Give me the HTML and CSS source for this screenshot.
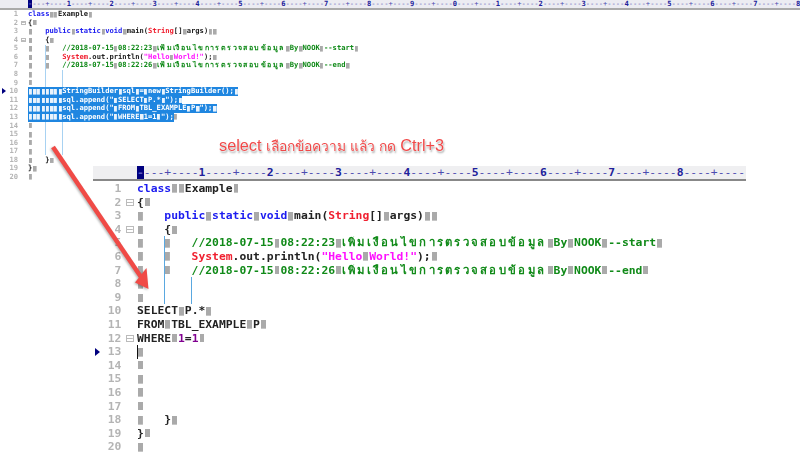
FILE: index.html
```html
<!DOCTYPE html>
<html lang="th">
<head>
<meta charset="utf-8">
<title>Ctrl+3 SQL</title>
<link rel="stylesheet" href="styles.css">
</head>
<body>
<section class="ed ed-a">
  <div class="ruler"><span class="rul"><b class="cur">-</b>---+----<b>1</b>----+----<b>2</b>----+----<b>3</b>----+----<b>4</b>----+----<b>5</b>----+----<b>6</b>----+----<b>7</b>----+----<b>8</b>----+----<b>9</b>----+----<b>0</b>----+----<b>1</b>----+----<b>2</b>----+----<b>3</b>----+----<b>4</b>----+----<b>5</b>----+----<b>6</b>----+----<b>7</b>----+----<b>8</b></span></div>
  <div class="body">
    <i class="guide g1"></i><i class="guide g2"></i>
    <div class="ln"><span class="n">1</span><span class="f"></span><code><em class="k">class</em><i class="m"></i><i class="m"></i>Example<i class="m"></i></code></div>
    <div class="ln"><span class="n">2</span><span class="f"><u class="box"></u></span><code>{<i class="m"></i></code></div>
    <div class="ln"><span class="n">3</span><span class="f"></span><code><i class="t"></i><em class="k">public</em><i class="m"></i><em class="k">static</em><i class="m"></i><em class="k">void</em><i class="m"></i>main(<em class="r">String</em>[]<i class="m"></i>args)<i class="m"></i><i class="m"></i></code></div>
    <div class="ln"><span class="n">4</span><span class="f"><u class="box"></u></span><code><i class="t"></i>{<i class="m"></i></code></div>
    <div class="ln"><span class="n">5</span><span class="f"></span><code><i class="t"></i><i class="t"></i><em class="c">//2018-07-15<i class="m"></i>08:22:23<i class="m"></i><span class="th">เพิ่มเงื่อนไขการตรวจสอบข้อมูล</span><i class="m"></i>By<i class="m"></i>NOOK<i class="m"></i>--start</em><i class="m"></i></code></div>
    <div class="ln"><span class="n">6</span><span class="f"></span><code><i class="t"></i><i class="t"></i><em class="r">System</em>.out.println(<em class="s">"Hello<i class="m"></i>World!"</em>);<i class="m"></i></code></div>
    <div class="ln"><span class="n">7</span><span class="f"></span><code><i class="t"></i><i class="t"></i><em class="c">//2018-07-15<i class="m"></i>08:22:26<i class="m"></i><span class="th">เพิ่มเงื่อนไขการตรวจสอบข้อมูล</span><i class="m"></i>By<i class="m"></i>NOOK<i class="m"></i>--end</em><i class="m"></i></code></div>
    <div class="ln"><span class="n">8</span><span class="f"></span><code><i class="m"></i></code></div>
    <div class="ln"><span class="n">9</span><span class="f"></span><code><i class="m"></i></code></div>
    <div class="ln"><span class="mark"></span><span class="n">10</span><span class="f"></span><code class="sel"><i class="m"></i><i class="m"></i><i class="m"></i><i class="m"></i><i class="m"></i><i class="m"></i><i class="m"></i><i class="m"></i>StringBuilder<i class="m"></i>sql<i class="m"></i>=<i class="m"></i>new<i class="m"></i>StringBuilder();<i class="m"></i></code></div>
    <div class="ln"><span class="n">11</span><span class="f"></span><code class="sel"><i class="m"></i><i class="m"></i><i class="m"></i><i class="m"></i><i class="m"></i><i class="m"></i><i class="m"></i><i class="m"></i>sql.append("<i class="m"></i>SELECT<i class="m"></i>P.*<i class="m"></i>");<i class="m"></i></code></div>
    <div class="ln"><span class="n">12</span><span class="f"></span><code class="sel"><i class="m"></i><i class="m"></i><i class="m"></i><i class="m"></i><i class="m"></i><i class="m"></i><i class="m"></i><i class="m"></i>sql.append("<i class="m"></i>FROM<i class="m"></i>TBL_EXAMPLE<i class="m"></i>P<i class="m"></i>");<i class="m"></i></code></div>
    <div class="ln"><span class="n">13</span><span class="f"></span><code class="sel"><i class="m"></i><i class="m"></i><i class="m"></i><i class="m"></i><i class="m"></i><i class="m"></i><i class="m"></i><i class="m"></i>sql.append("<i class="m"></i>WHERE<i class="m"></i>1=1<i class="m"></i>");</code><code><i class="m"></i></code></div>
    <div class="ln"><span class="n">14</span><span class="f"></span><code><i class="m"></i></code></div>
    <div class="ln"><span class="n">15</span><span class="f"></span><code><i class="m"></i></code></div>
    <div class="ln"><span class="n">16</span><span class="f"></span><code><i class="m"></i></code></div>
    <div class="ln"><span class="n">17</span><span class="f"></span><code><i class="m"></i></code></div>
    <div class="ln"><span class="n">18</span><span class="f"></span><code><i class="t"></i>}<i class="m"></i></code></div>
    <div class="ln"><span class="n">19</span><span class="f"></span><code>}<i class="m"></i></code></div>
    <div class="ln"><span class="n">20</span><span class="f"></span><code><i class="m"></i></code></div>
  </div>
</section>

<section class="ed ed-b">
  <div class="ruler"><span class="rul"><b class="cur">-</b>---+----<b>1</b>----+----<b>2</b>----+----<b>3</b>----+----<b>4</b>----+----<b>5</b>----+----<b>6</b>----+----<b>7</b>----+----<b>8</b>----+----</span></div>
  <div class="body">
    <i class="guide g3"></i><i class="guide g4"></i>
    <div class="ln"><span class="n">1</span><span class="f"></span><code><em class="k">class</em><i class="m"></i><i class="m"></i>Example<i class="m"></i></code></div>
    <div class="ln"><span class="n">2</span><span class="f"><u class="box"></u></span><code>{<i class="m"></i></code></div>
    <div class="ln"><span class="n">3</span><span class="f"></span><code><i class="t"></i><em class="k">public</em><i class="m"></i><em class="k">static</em><i class="m"></i><em class="k">void</em><i class="m"></i>main(<em class="r">String</em>[]<i class="m"></i>args)<i class="m"></i><i class="m"></i></code></div>
    <div class="ln"><span class="n">4</span><span class="f"><u class="box"></u></span><code><i class="t"></i>{<i class="m"></i></code></div>
    <div class="ln"><span class="n">5</span><span class="f"></span><code><i class="t"></i><i class="t"></i><em class="c">//2018-07-15<i class="m"></i>08:22:23<i class="m"></i><span class="th">เพิ่มเงื่อนไขการตรวจสอบข้อมูล</span><i class="m"></i>By<i class="m"></i>NOOK<i class="m"></i>--start</em><i class="m"></i></code></div>
    <div class="ln"><span class="n">6</span><span class="f"></span><code><i class="t"></i><i class="t"></i><em class="r">System</em>.out.println(<em class="s">"Hello<i class="m"></i>World!"</em>);<i class="m"></i></code></div>
    <div class="ln"><span class="n">7</span><span class="f"></span><code><i class="t"></i><i class="t"></i><em class="c">//2018-07-15<i class="m"></i>08:22:26<i class="m"></i><span class="th">เพิ่มเงื่อนไขการตรวจสอบข้อมูล</span><i class="m"></i>By<i class="m"></i>NOOK<i class="m"></i>--end</em><i class="m"></i></code></div>
    <div class="ln"><span class="n">8</span><span class="f"></span><code><i class="m"></i></code></div>
    <div class="ln"><span class="n">9</span><span class="f"></span><code><i class="m"></i></code></div>
    <div class="ln"><span class="n">10</span><span class="f"></span><code>SELECT<i class="m"></i>P.*<i class="m"></i></code></div>
    <div class="ln"><span class="n">11</span><span class="f"></span><code>FROM<i class="m"></i>TBL_EXAMPLE<i class="m"></i>P<i class="m"></i></code></div>
    <div class="ln"><span class="n">12</span><span class="f"><u class="box"></u></span><code>WHERE<i class="m"></i><em class="p">1</em>=<em class="p">1</em><i class="m"></i></code></div>
    <div class="ln"><span class="mark"></span><span class="n">13</span><span class="f"></span><code><i class="caret"></i><i class="m"></i></code></div>
    <div class="ln"><span class="n">14</span><span class="f"></span><code><i class="m"></i></code></div>
    <div class="ln"><span class="n">15</span><span class="f"></span><code><i class="m"></i></code></div>
    <div class="ln"><span class="n">16</span><span class="f"></span><code><i class="m"></i></code></div>
    <div class="ln"><span class="n">17</span><span class="f"></span><code><i class="m"></i></code></div>
    <div class="ln"><span class="n">18</span><span class="f"></span><code><i class="t"></i>}<i class="m"></i></code></div>
    <div class="ln"><span class="n">19</span><span class="f"></span><code>}<i class="m"></i></code></div>
    <div class="ln"><span class="n">20</span><span class="f"></span><code><i class="m"></i></code></div>
  </div>
</section>

<p class="note">select <span class="note-th">เลือกข้อความ แล้ว กด</span> Ctrl+3</p>

<svg class="arrow" width="800" height="473" viewBox="0 0 800 473" aria-hidden="true">
  <path class="shaft" d="M53 147 L141 277"/>
  <path class="head" d="M148.5 289 L135 282.5 L146.5 268 Z"/>
</svg>
</body>
</html>
```
FILE: styles.css
```css
html, body {
  margin: 0;
  padding: 0;
  width: 800px;
  height: 473px;
  overflow: hidden;
  background: #fff;
}
body { position: relative; }

.ed {
  --cw: 4.292px;
  --lh: 8.58px;
  --fs: 7.13px;
  --gut: 28px;
  font-family: "DejaVu Sans Mono", "Noto Sans CJK SC", monospace;
  font-size: var(--fs);
  font-weight: 700;
  color: #222;
  filter: blur(0.35px);
}
.ed-a { width: 800px; }
.ed-b {
  --cw: 6.83px;
  --lh: 13.6px;
  --fs: 11.35px;
  --gut: 44px;
  position: absolute;
  left: 93px;
  top: 166px;
  width: 653px;
  filter: blur(0.3px);
}

.ruler {
  height: 8px;
  padding-left: var(--gut);
  background: #ececf2;
  border-bottom: 2px solid #aaa;
  overflow: hidden;
  white-space: nowrap;
  line-height: 8px;
  font-weight: 400;
  color: #4c4cb0;
}
.ruler b { color: #20209a; font-weight: 700; }
.ruler .cur { color: #5a5ac0; }
.ed-b .ruler { height: 13px; line-height: 13px; border-bottom-color: #888; background: #efeff1; }
.cur { background: #00007f; display: inline-block; height: 100%; }

.body { position: relative; }
.ed-b .body { padding-top: 1px; }

.ln {
  position: relative;
  display: flex;
  height: var(--lh);
  line-height: var(--lh);
  white-space: pre;
}
.n {
  width: calc(var(--gut) - var(--cw) * 2.1);
  padding-right: calc(var(--cw) * 0.2);
  box-sizing: border-box;
  text-align: right;
  color: #b4b4b4;
}
.f {
  width: calc(var(--cw) * 2.1);
  display: flex;
  align-items: center;
  justify-content: center;
}
.box {
  width: calc(var(--cw) * 1.1);
  height: calc(var(--cw) * 1.1);
  border: 1px solid #bbb;
  box-sizing: border-box;
  background: linear-gradient(#bbb, #bbb) center / 100% 1px no-repeat;
}
code { font: inherit; display: block; height: 100%; }
em { font-style: normal; }
.k { color: #1c1cf0; }
.r { color: #f02030; }
.c { color: #108a18; }
.s { color: #ff10ff; }
.p { color: #800090; }
.th {
  display: inline-block;
  width: calc(var(--cw) * 30);
  height: 100%;
  overflow: hidden;
  vertical-align: top;
  font-weight: 700;
  letter-spacing: 0.2em;
}

.m, .t {
  display: inline-block;
  height: 100%;
  vertical-align: top;
}
.m {
  width: var(--cw);
  background: linear-gradient(#aaa, #aaa) center / 72% 62% no-repeat;
}
.t {
  width: calc(var(--cw) * 4);
  background: linear-gradient(#aaa, #aaa) calc(var(--cw) * 0.14) center / calc(var(--cw) * 0.72) 62% no-repeat;
}
.sel {
  background: #1f86e0;
  color: #fff;
}
.sel .m { background-image: linear-gradient(#eaf3fc, #eaf3fc); }
.caret {
  display: inline-block;
  width: 1px;
  height: 100%;
  margin-right: -1px;
  background: #111;
  vertical-align: top;
}
.mark {
  position: absolute;
  left: 2px;
  top: 50%;
  margin-top: -3px;
  border-left: 4px solid #00007f;
  border-top: 3px solid transparent;
  border-bottom: 3px solid transparent;
}
.ed-b .mark {
  margin-top: -4px;
  border-left-width: 5px;
  border-top-width: 4px;
  border-bottom-width: 4px;
}
.guide {
  position: absolute;
  width: 1px;
}
.g1 { left: 45px; top: 35px; height: 110px; background: #a8d2f2; }
.g2 { left: 62px; top: 60px; height: 85px; background: #a8d2f2; }
.g3 { left: 71px; top: 55px; height: 68px; background: #5aa8e0; }
.g4 { left: 98px; top: 96px; height: 27px; background: #5aa8e0; }

.note {
  position: absolute;
  left: 219px;
  top: 136px;
  margin: 0;
  font-family: "Liberation Sans", "Noto Sans", sans-serif;
  font-size: 16.3px;
  line-height: 18px;
  white-space: nowrap;
  color: #f04848;
  text-shadow: 0 0 1px #fff, 0 0 2px #fff, 1px 2px 2px rgba(0,0,0,.4);
}
.note-th { font-size: 13.8px; }
.arrow {
  position: absolute;
  left: 0;
  top: 0;
  pointer-events: none;
  filter: drop-shadow(-1px 1px 1px rgba(0,0,0,.3));
}
.shaft { stroke: #f04a46; stroke-width: 4.5; fill: none; }
.head { fill: #f04a46; }
```
